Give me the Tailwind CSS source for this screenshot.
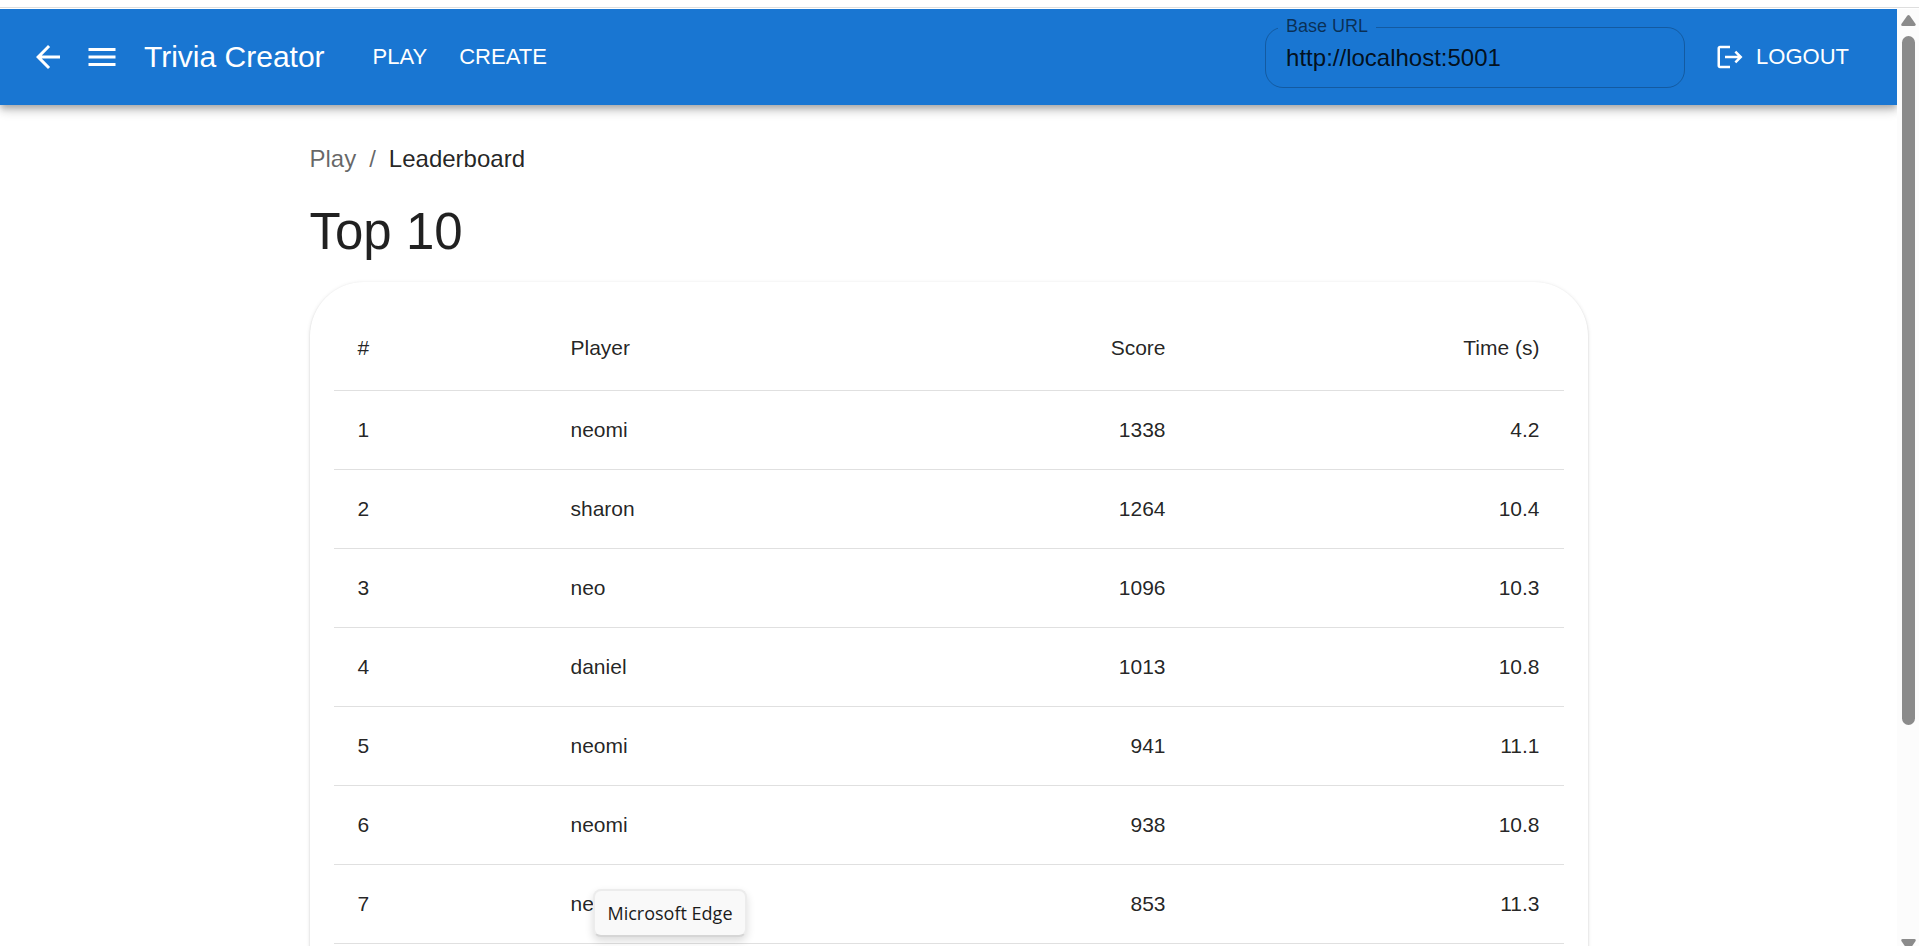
<!DOCTYPE html>
<html lang="en">
<head>
<meta charset="utf-8">
<meta name="viewport" content="width=device-width, initial-scale=1">
<title>Trivia Creator</title>
<script src="https://cdn.jsdelivr.net/npm/@tailwindcss/browser@4"></script>
</head>
<body class="h-screen overflow-hidden bg-white font-['Liberation_Sans',Arial,sans-serif] text-black/87">
<div class="flex h-full flex-col">
  <div class="mb-px h-2 flex-none border-b border-[#dedede]"></div>
  <div class="flex min-h-0 flex-1">
    <div class="flex min-w-0 flex-1 flex-col overflow-hidden">
      <header class="z-10 flex h-24 flex-none items-center bg-[#1976d2] px-[30px] text-white shadow-[0_3px_6px_-1px_rgba(0,0,0,0.2),0_6px_8px_0_rgba(0,0,0,0.14),0_2px_15px_0_rgba(0,0,0,0.12)]">
        <button type="button" aria-label="Back" class="mr-[18px]">
          <svg class="size-9" viewBox="0 0 24 24" fill="currentColor"><path d="M20 11H7.83l5.59-5.59L12 4l-8 8 8 8 1.41-1.41L7.83 13H20z"/></svg>
        </button>
        <button type="button" aria-label="Menu" class="mr-6">
          <svg class="size-9" viewBox="0 0 24 24" fill="currentColor"><path d="M3 18h18v-2H3zm0-5h18v-2H3zm0-7v2h18V6z"/></svg>
        </button>
        <div class="mr-9 whitespace-nowrap text-[30px] leading-[48px]">Trivia Creator</div>
        <nav class="flex text-[22px] leading-9">
          <a href="#play" class="px-3">PLAY</a>
          <a href="#create" class="ml-2 px-3">CREATE</a>
        </nav>
        <fieldset class="-mt-3 ml-auto mr-[30px] w-[420px] rounded-[18px] border border-black/23 pl-3">
          <legend class="px-2 pb-1 text-lg leading-[22px] text-black/60"><label for="base-url">Base URL</label></legend>
          <input id="base-url" type="text" value="http://localhost:5001" class="mb-2 block h-[38px] w-full bg-transparent px-2 pb-1 text-2xl text-black/87 outline-none">
        </fieldset>
        <button type="button" class="mr-[18px] flex items-center gap-[11px] text-[22px] leading-9">
          <svg class="size-[30px]" viewBox="0 0 24 24" fill="currentColor"><path d="m17 7-1.41 1.41L18.17 11H8v2h10.17l-2.58 2.58L17 17l5-5zM4 5h8V3H4c-1.1 0-2 .9-2 2v14c0 1.1.9 2 2 2h8v-2H4z"/></svg>
          LOGOUT
        </button>
      </header>

      <main class="mx-auto w-full max-w-[1350px] px-9 pt-9">
        <nav aria-label="Breadcrumb" class="flex gap-[13px] text-2xl leading-9 text-black/60">
          <a href="#play">Play</a><span>/</span><span aria-current="page" class="text-black/87">Leaderboard</span>
        </nav>
        <h1 class="mb-[18px] mt-[23px] text-[51px] leading-[64px]">Top 10</h1>
        <section class="rounded-[54px] bg-white px-6 pb-24 pt-6 shadow-[0_3px_2px_-2px_rgba(0,0,0,0.2),0_1px_2px_0_rgba(0,0,0,0.12),0_1px_4px_0_rgba(0,0,0,0.12)]">
          <table class="w-full table-fixed text-[21px] [&_td]:border-b [&_td]:border-[#e0e0e0] [&_td]:px-6 [&_td]:py-6 [&_td]:leading-[30px] [&_th]:border-b [&_th]:border-[#e0e0e0] [&_th]:px-6 [&_th]:py-6 [&_th]:font-normal [&_th]:leading-9">
            <colgroup><col class="w-[213px]"><col><col class="w-[310px]"><col class="w-[374px]"></colgroup>
            <thead>
              <tr class="text-left"><th>#</th><th>Player</th><th class="text-right">Score</th><th class="text-right">Time (s)</th></tr>
            </thead>
            <tbody>
              <tr><td>1</td><td>neomi</td><td class="text-right">1338</td><td class="text-right">4.2</td></tr>
              <tr><td>2</td><td>sharon</td><td class="text-right">1264</td><td class="text-right">10.4</td></tr>
              <tr><td>3</td><td>neo</td><td class="text-right">1096</td><td class="text-right">10.3</td></tr>
              <tr><td>4</td><td>daniel</td><td class="text-right">1013</td><td class="text-right">10.8</td></tr>
              <tr><td>5</td><td>neomi</td><td class="text-right">941</td><td class="text-right">11.1</td></tr>
              <tr><td>6</td><td>neomi</td><td class="text-right">938</td><td class="text-right">10.8</td></tr>
              <tr><td>7</td><td>neomi</td><td class="text-right">853</td><td class="text-right">11.3</td></tr>
            </tbody>
          </table>
        </section>
      </main>
    </div>

    <!-- Scrollbar -->
    <div class="flex w-[22px] flex-none flex-col items-center bg-[#fcfcfc] pt-1.5" aria-hidden="true">
      <svg class="h-[11px] w-[15px] flex-none" viewBox="0 0 15 11" fill="#8b8b8b"><path d="M6.2.8Q7.5-.6 8.8.8L14.6 9Q15.2 11 13.4 11H1.6Q-.2 11 .4 9z"/></svg>
      <div class="mb-auto mt-2.5 h-[74%] w-[13px] rounded-full bg-[#8b8b8b]"></div>
      <svg class="h-[7px] w-[15px] flex-none" viewBox="0 0 15 7" fill="#8b8b8b"><path d="M1.6 0H13.4Q15.2 0 14.6 2L11.2 7H3.8L.4 2Q-.2 0 1.6 0z"/></svg>
    </div>
  </div>
</div>

<div role="tooltip" class="absolute bottom-[9px] left-[593px] z-20 flex h-12 w-[154px] items-center justify-center whitespace-nowrap rounded-lg border-2 border-[#ececec] border-b-[#d6d6d6] bg-[#f9f9f9] font-['Open_Sans','Noto_Sans',sans-serif] text-lg text-[#1b1b1b] shadow-[0_4px_8px_rgba(0,0,0,0.14)]">Microsoft Edge</div>
</body>
</html>
